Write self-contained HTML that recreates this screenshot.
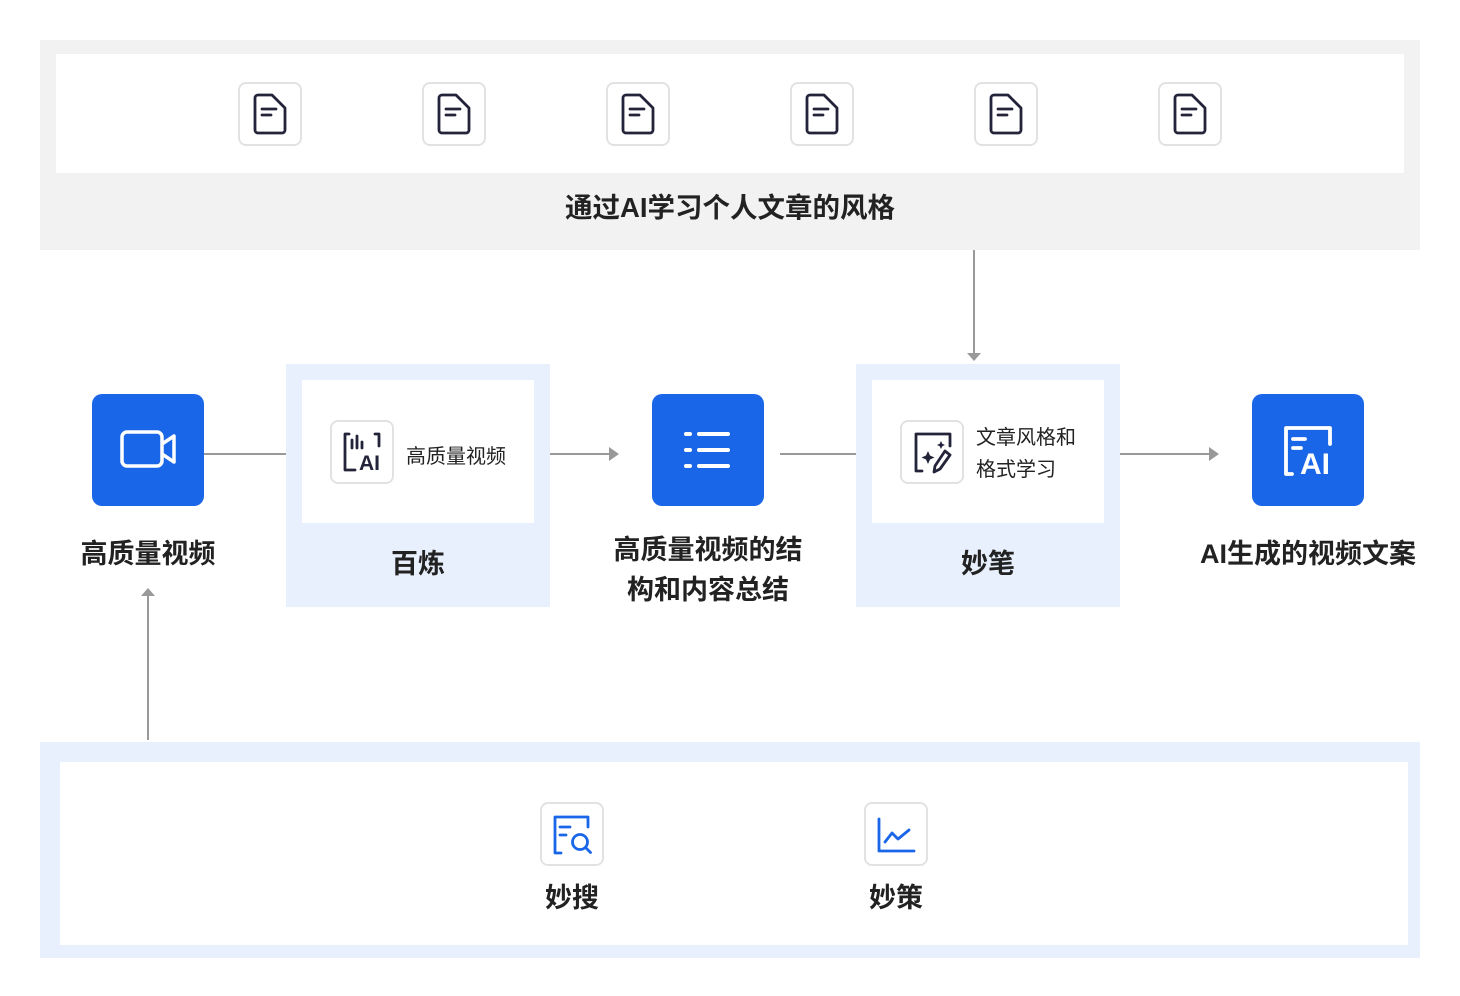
<!DOCTYPE html>
<html><head><meta charset="utf-8"><style>
*{margin:0;padding:0;box-sizing:border-box}
body{width:1460px;height:996px;background:#fff;position:relative;font-family:"Liberation Sans","Noto Sans CJK SC",sans-serif;color:#222;overflow:hidden}
.a{position:absolute}
.ib{position:absolute;width:64px;height:64px;border:2px solid #e2e2e2;border-radius:8px;background:#fff}
.ib svg{position:absolute;left:-2px;top:-2px}
.blue{position:absolute;width:112px;height:112px;background:#1a66e8;border-radius:10px}
.blue svg{position:absolute;left:0;top:0}
.lbl{position:absolute;font-size:27px;font-weight:bold;text-align:center;color:#222;line-height:40px}
.hl{position:absolute;height:2px;background:#999}
.vl{position:absolute;width:2px;background:#999}
</style></head><body>
<div class="a" style="left:40px;top:40px;width:1380px;height:210px;background:#f2f2f2"></div>
<div class="a" style="left:56px;top:54px;width:1348px;height:119px;background:#fff"></div>
<div class="lbl" style="left:40px;width:1380px;top:188px;font-size:27.5px">通过AI学习个人文章的风格</div>

<svg width="0" height="0" style="position:absolute"><defs>
<g id="doc"><path d="M20 13h14l13 13v22a3 3 0 0 1-3 3H20a3 3 0 0 1-3-3V16a3 3 0 0 1 3-3z" fill="none" stroke="#23233a" stroke-width="2.8" stroke-linejoin="round"/><path d="M24 27h14M24 33h9" stroke="#23233a" stroke-width="2.8" stroke-linecap="round"/></g>
</defs></svg>
<div class="ib" style="left:238px;top:82px"><svg width="64" height="64"><use href="#doc"/></svg></div>
<div class="ib" style="left:422px;top:82px"><svg width="64" height="64"><use href="#doc"/></svg></div>
<div class="ib" style="left:606px;top:82px"><svg width="64" height="64"><use href="#doc"/></svg></div>
<div class="ib" style="left:790px;top:82px"><svg width="64" height="64"><use href="#doc"/></svg></div>
<div class="ib" style="left:974px;top:82px"><svg width="64" height="64"><use href="#doc"/></svg></div>
<div class="ib" style="left:1158px;top:82px"><svg width="64" height="64"><use href="#doc"/></svg></div>

<div class="vl" style="left:973px;top:250px;height:104px"></div>
<svg class="a" style="left:966px;top:352px" width="16" height="10"><path d="M1 1h14L8 9z" fill="#999"/></svg>

<div class="blue" style="left:92px;top:394px"><svg width="112" height="112"><rect x="30" y="38" width="40" height="34" rx="5" fill="none" stroke="#fff" stroke-width="3.5"/><path d="M70 50l12-8v26l-12-8" fill="none" stroke="#fff" stroke-width="3.5" stroke-linejoin="round"/></svg></div>
<div class="lbl" style="left:38px;width:220px;top:534px">高质量视频</div>
<div class="hl" style="left:204px;top:453px;width:82px"></div>
<div class="vl" style="left:147px;top:596px;height:144px"></div>
<svg class="a" style="left:140px;top:587px" width="16" height="10"><path d="M1 9h14L8 1z" fill="#999"/></svg>

<div class="a" style="left:286px;top:364px;width:264px;height:243px;background:#e9f0fd"></div>
<div class="a" style="left:302px;top:380px;width:232px;height:143px;background:#fff"></div>
<div class="ib" style="left:330px;top:420px"><svg width="64" height="64"><path d="M19 14h-4v36h10M45 14h4v12" fill="none" stroke="#23233a" stroke-width="2.8" stroke-linecap="round" stroke-linejoin="round"/><path d="M22 20v8M27 16v12M32 22v6" stroke="#23233a" stroke-width="2.8" stroke-linecap="round"/><text x="29" y="50" font-family="Liberation Sans" font-weight="bold" font-size="21" fill="#23233a">AI</text></svg></div>
<div class="a" style="left:406px;top:440px;font-size:20px;color:#222">高质量视频</div>
<div class="lbl" style="left:286px;width:264px;top:544px">百炼</div>
<div class="hl" style="left:550px;top:453px;width:60px"></div>
<svg class="a" style="left:608px;top:446px" width="12" height="16"><path d="M1 1v14l10-7z" fill="#999"/></svg>

<div class="blue" style="left:652px;top:394px"><svg width="112" height="112"><g stroke="#fff" stroke-width="4" stroke-linecap="round"><path d="M34 40h4M34 56h4M34 72h4M47 40h29M47 56h29M47 72h29"/></g></svg></div>
<div class="lbl" style="left:578px;width:260px;top:530px">高质量视频的结<br>构和内容总结</div>
<div class="hl" style="left:780px;top:453px;width:76px"></div>

<div class="a" style="left:856px;top:364px;width:264px;height:243px;background:#e9f0fd"></div>
<div class="a" style="left:872px;top:380px;width:232px;height:143px;background:#fff"></div>
<div class="ib" style="left:900px;top:420px"><svg width="64" height="64"><path d="M22 51h-6V14h34v12" fill="none" stroke="#23233a" stroke-width="2.8" stroke-linecap="round" stroke-linejoin="round"/><path d="M28 31l2 4.5 4.5 2-4.5 2-2 4.5-2-4.5-4.5-2 4.5-2zM41 21l1.3 2.7 2.7 1.3-2.7 1.3-1.3 2.7-1.3-2.7-2.7-1.3 2.7-1.3z" fill="#23233a"/><path d="M45 31l5 4-10 14-6 3 1-6z" fill="none" stroke="#23233a" stroke-width="2.8" stroke-linejoin="round"/></svg></div>
<div class="a" style="left:976px;top:422px;font-size:20px;color:#222;line-height:32px">文章风格和<br>格式学习</div>
<div class="lbl" style="left:856px;width:264px;top:544px">妙笔</div>
<div class="hl" style="left:1120px;top:453px;width:90px"></div>
<svg class="a" style="left:1208px;top:446px" width="12" height="16"><path d="M1 1v14l10-7z" fill="#999"/></svg>

<div class="blue" style="left:1252px;top:394px"><svg width="112" height="112"><path d="M40 80h-6V34h44v16" fill="none" stroke="#fff" stroke-width="3.8" stroke-linecap="round" stroke-linejoin="round"/><path d="M41 45h12M41 54h8" stroke="#fff" stroke-width="3.8" stroke-linecap="round"/><text x="48" y="80" font-family="Liberation Sans" font-weight="bold" font-size="30" fill="#fff">AI</text></svg></div>
<div class="lbl" style="left:1170px;width:276px;top:534px">AI生成的视频文案</div>

<div class="a" style="left:40px;top:742px;width:1380px;height:216px;background:#e9f0fd"></div>
<div class="a" style="left:60px;top:762px;width:1348px;height:183px;background:#fff"></div>
<div class="ib" style="left:540px;top:802px"><svg width="64" height="64"><path d="M21 51h-6V15h33v10" fill="none" stroke="#1a66e8" stroke-width="2.8" stroke-linecap="round" stroke-linejoin="round"/><path d="M20 25h10M20 33h6" stroke="#1a66e8" stroke-width="2.8" stroke-linecap="round"/><circle cx="40" cy="40" r="7.5" fill="none" stroke="#1a66e8" stroke-width="2.8"/><path d="M45.5 45.5l5 5" stroke="#1a66e8" stroke-width="2.8" stroke-linecap="round"/></svg></div>
<div class="lbl" style="left:492px;width:160px;top:878px">妙搜</div>
<div class="ib" style="left:864px;top:802px"><svg width="64" height="64"><path d="M15 17v32h35" fill="none" stroke="#1a66e8" stroke-width="2.8" stroke-linecap="round" stroke-linejoin="round"/><path d="M21 40l7-9 6 6 11-9" fill="none" stroke="#1a66e8" stroke-width="2.8" stroke-linecap="round" stroke-linejoin="round"/></svg></div>
<div class="lbl" style="left:816px;width:160px;top:878px">妙策</div>
</body></html>
